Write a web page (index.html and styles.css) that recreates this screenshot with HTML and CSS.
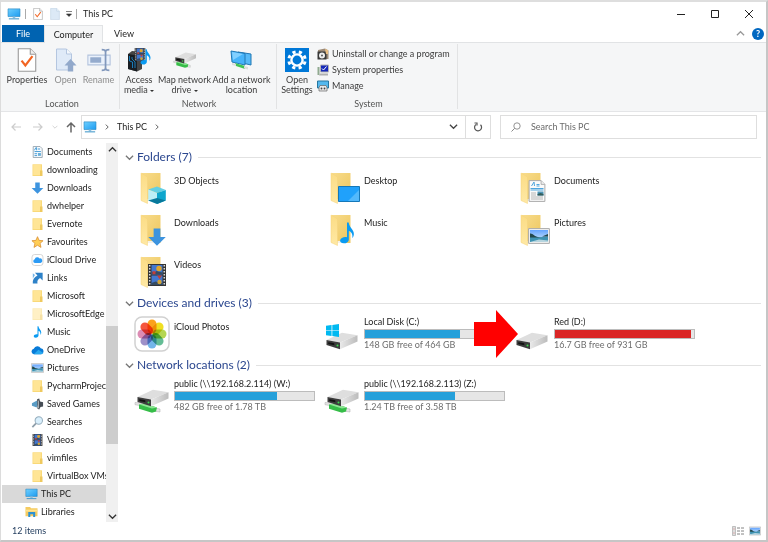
FILE: index.html
```html
<!DOCTYPE html>
<html lang="en">
<head>
<meta charset="utf-8">
<title>This PC</title>
<link rel="stylesheet" href="styles.css">
</head>
<body>
<svg class="sprite" aria-hidden="true">
  <defs>
    <linearGradient id="gScreen" x1="0" y1="0" x2="1" y2="1"><stop offset="0" stop-color="#6fd0ff"/><stop offset="1" stop-color="#1c9bf0"/></linearGradient>
    <linearGradient id="gFold" x1="0" y1="0" x2="1" y2="1"><stop offset="0" stop-color="#f8dc8c"/><stop offset="1" stop-color="#edc65e"/></linearGradient>
    <linearGradient id="gFlap" x1="0" y1="0" x2="0" y2="1"><stop offset="0" stop-color="#fbdc85"/><stop offset="1" stop-color="#ffe9a5"/></linearGradient>
    <linearGradient id="gDrive" x1="0" y1="0" x2="1" y2="0"><stop offset="0" stop-color="#e9e9e9"/><stop offset="1" stop-color="#bcbcbc"/></linearGradient>
    <linearGradient id="gSky" x1="0" y1="0" x2="0" y2="1"><stop offset="0" stop-color="#64a4ff"/><stop offset="1" stop-color="#d8eefa"/></linearGradient>
  </defs>
  <symbol id="pc" viewBox="0 0 16 14"><path d="M1 1h14v9H1z" fill="url(#gScreen)" stroke="#2a86c0" stroke-width=".7"/><path d="M6.500 10h3v2h-3z" fill="#8bbfe0"/><path d="M2 12h12v1.300H2z" fill="#4a9ccc"/></symbol>
  <symbol id="check" viewBox="0 0 18 22"><path d="M1 .7h11l5 5v15.600H1z" fill="#fff" stroke="#999"/><path d="M12 .7v5h5" fill="#eee" stroke="#999"/><path d="M4 11.500l3.500 4.500 6.500-8.500" fill="none" stroke="#f26522" stroke-width="2"/></symbol>
  <symbol id="page" viewBox="0 0 18 22"><path d="M1 .7h11l5 5v15.600H1z" fill="#dce9f6" stroke="#b9cde2"/><path d="M12 .7v5h5" fill="#eef5fb" stroke="#b9cde2"/></symbol>
  <symbol id="open" viewBox="0 0 22 24"><path d="M1.500 1h10l5 5v16h-15z" fill="#dfeaf8" stroke="#b4c6e0"/><path d="M11.500 1v5h5" fill="#f4f8fd" stroke="#b4c6e0"/><path d="M15.500 11l6 6.500h-3.300v6h-5.400v-6H9.500z" fill="#92a9cb"/></symbol>
  <symbol id="rename" viewBox="0 0 22 22"><path d="M.8 6.500h20.400v9H.8z" fill="#eaf1fb" stroke="#b4c4dd"/><path d="M3 8.500h10v5H3z" fill="#94abcd"/><path d="M13.500 1.500c2.500 0 3.500.5 3.500 2v15c0 1.500-1 2-3.500 2M20.500 1.500c-2.500 0-3.500.5-3.500 2M17 18.500c0 1.500 1 2 3.500 2" fill="none" stroke="#8298bc" stroke-width="1.600"/></symbol>
  <symbol id="folder" viewBox="0 0 10 12"><path d="M0 .3h9.500V12H0z" fill="#f9d978"/><path d="M.7.9h7.600V11H.7z" fill="#ffe596"/><path d="M7.500 6.500h2.500V12H7.500z" fill="#efc95e"/></symbol>
  <symbol id="doc" viewBox="0 0 12 14"><path d="M1 .6h8l2.500 2.500v10.300H1z" fill="#fafcfe" stroke="#8798a5" stroke-width=".9"/><path d="M2.500 5l1.500-3h1v3M6.500 3.500H9M2.500 6.500h7.500M2.500 9h3M2.500 11.200h3" stroke="#3b97d3" stroke-width="1.100" fill="none"/><path d="M6.500 8.200h3.500v3.300H6.500z" fill="#69afd9"/></symbol>
  <symbol id="down" viewBox="0 0 16 16"><path d="M5 .5h6v7.500h4.800L8 15.800.2 8H5z" fill="#3d94df"/></symbol>
  <symbol id="star" viewBox="0 0 14 14"><path d="M7 .8l1.800 4.300 4.700.4L10 8.600l1.100 4.700L7 10.800l-4.100 2.500L4 8.600.5 5.500l4.700-.4z" fill="#ffce57" stroke="#d98e31" stroke-width=".9"/></symbol>
  <symbol id="icloud" viewBox="0 0 14 14"><rect x=".6" y=".6" width="12.800" height="12.800" rx="3" fill="#fff" stroke="#cfcfcf"/><path d="M4 10.500a2.300 2.300 0 0 1-.2-4.500 3 3 0 0 1 5.500-.8 2.700 2.700 0 0 1 1.200 5.300z" fill="#2c9bf5"/></symbol>
  <symbol id="link" viewBox="0 0 14 14"><path d="M4 1h9v9l-3-3c-3 2-3.500 3.500-3 6.500H1.500C1 9 3 6 7 4z" fill="#2e82c8"/><path d="M1.500 1.500l2.500 2-2.500 4z" fill="#73b4e7"/></symbol>
  <symbol id="note" viewBox="0 0 16 24"><path d="M8 .5h1.800C10.500 6 15.500 8 15.500 13c0 2-1 4-1.700 4.500C14.500 13 12.500 10.500 10 9.500V19c0 2.500-2.500 4.300-5.500 4.300S.3 21.700.5 20C.8 17.500 5 15.800 8 16.700z" fill="#0a9bf2"/></symbol>
  <symbol id="onedrive" viewBox="0 0 14 10"><path d="M3 9.500a3 3 0 0 1 0-5.900A4.300 4.300 0 0 1 10.500 3a3.300 3.300 0 0 1 .5 6.500z" fill="#087bd8"/><path d="M3 9.500l5-4.800 5.300 3.500A3 3 0 0 1 11 9.500z" fill="#28a8ee"/></symbol>
  <symbol id="picture" viewBox="0 0 22 16"><path d="M.6.600h20.800v14.800H.6z" fill="#f4f4f4" stroke="#aaa"/><path d="M2 2h18v12H2z" fill="url(#gSky)"/><path d="M2 6c3 0 4 3 9 3.200l9-.7V14H2z" fill="#3e93b2"/><path d="M2 5.500c3-.5 4 3 8 3.500l3 .5H2zM14 8.500l6-2.500v2.500z" fill="#24494c"/><path d="M2 14l9-2.500 9 1V14z" fill="#b7d5df"/></symbol>
  <symbol id="games" viewBox="0 0 14 14"><path d="M.5 6l6-3 1.500 4-2 4-5.500-2z" fill="#599bc4"/><path d="M6.500 1.500l2.500-1 1 3.500 3.500 1v5l-3 .5-1.500 3-2-1z" fill="#454d55"/><path d="M8 3v9" stroke="#c5d1d8"/></symbol>
  <symbol id="search" viewBox="0 0 14 14"><circle cx="8.500" cy="5.300" r="4.300" fill="#d9effc" stroke="#94adbd" stroke-width="1.200"/><path d="M5.300 8.500L1 13" stroke="#8e9eaa" stroke-width="2"/></symbol>
  <symbol id="film" viewBox="0 0 18 22"><path d="M0 0h18v22H0z" fill="#343434"/><path d="M3.500 1h11v9.500h-11zM3.500 11.500h11V21h-11z" fill="#4277cf"/><path d="M3.500 7.500l3 1 2-1.500 6 1.500v2h-11zM3.500 19l4-1.500 7 1.500v2h-11z" fill="#354c63"/><circle cx="11" cy="4.500" r="2.700" fill="#dfa52d"/><path d="M4.500 7.200h3v3h-3zM9 11.500h5l-2.500 3.500z" fill="#c43e37"/><circle cx="11.500" cy="18" r="2.200" fill="#d2a436"/><path d="M1.700 1v20M16.300 1v20" stroke="#ddd" stroke-width="1.500" stroke-dasharray="1.500 1.500"/></symbol>
  <symbol id="libraries" viewBox="0 0 14 13"><path d="M.5 1h5l1 1.500h7V11H.5z" fill="#f5cb61"/><path d="M.5 4h13v2H.5z" fill="#ffe48f"/><path d="M3.500 6.500H11V12H8.800V9H5.700v3H3.500z" fill="#2c91d2"/></symbol>
  <symbol id="bigfolder" viewBox="0 0 22 32"><path d="M2 1h18.500v28H2z" fill="url(#gFold)"/><path d="M6 27h8v2H6z" fill="#f4f1e8"/><path d="M1 1l6.500 4v26.500L1 28.500z" fill="url(#gFlap)" stroke="#f4d27a" stroke-width=".5"/></symbol>
  <symbol id="cube" viewBox="0 0 18 18"><path d="M9 .5l8.800 3.500L9 7 .2 3.500z" fill="#62cfe3"/><path d="M.2 3.500L9 7v11L.2 14.500z" fill="#bceef6"/><path d="M17.800 4L9 7v11l8.800-3.500z" fill="#0da6cd"/><path d="M.2 14.500L9 12l8.800 2.500L9 18z" fill="#08799c"/></symbol>
  <symbol id="desktop" viewBox="0 0 22 16"><path d="M.5.500h21v15H.5z" fill="#20a1fb" stroke="#1578b9"/><path d="M10 15L21 4v11z" fill="#53b9fc"/></symbol>
  <symbol id="bigdoc" viewBox="0 0 17 22"><path d="M.6.600h12l3.800 3.800v17H.6z" fill="#fafafa" stroke="#aaa"/><path d="M12.600.600v3.800h3.800" fill="#eee" stroke="#999" stroke-width=".7"/><path d="M3 6l2.500-4L6 6M8 4.500h3M8 6h3M2 8.500h13M2 10h13" stroke="#4da5dd" fill="none"/><path d="M2.500 13h5M2.500 15h5M2.500 17h12M2.500 19h12" stroke="#999" stroke-width=".7"/><path d="M9 11.500h6v4H9z" fill="#4d95b7"/><path d="M9 14l3-1 3 1v1.500H9z" fill="#355d5a"/></symbol>
  <symbol id="drive" viewBox="0 0 32 18"><path d="M.5 8L16 .8l15.500 2.400L14 10.500z" fill="#dedede"/><path d="M31.500 3.200v6.300L14 17.300v-6.800z" fill="url(#gDrive)"/><path d="M.5 8L14 10.500v6.800L.5 13z" fill="#3c3c3c"/><path d="M2.300 10.200l6 1.100v2l-6-1.400z" fill="#111"/><circle cx="11.500" cy="13.500" r="1" fill="#38d84a"/></symbol>
  <symbol id="netdrive" viewBox="0 0 36 24"><path d="M1 13.500l6 .5 2 3-8-1.300zM20 19l6 1v3l-7-1z" fill="#e6e6e6" stroke="#aaa" stroke-width=".5"/><path d="M5 15.500l5-1 13 4-1 4-4 1.300-13-4z" fill="#36bd48"/><path d="M5 15.500l5-1 13 4-5 1z" fill="#8be492"/><use href="#drive" x="3" y="0" width="32" height="18"/></symbol>
  <symbol id="win" viewBox="0 0 14 14"><path d="M0 2l6-.9v5.600H0zM6.800 1L14 0v6.700H6.800zM0 7.400h6V13l-6-.9zM6.800 7.400H14V14l-7.200-1z" fill="#00b9f1"/></symbol>
  <symbol id="photos" viewBox="0 0 36 36"><rect x="1" y="1" width="34" height="34" rx="7" fill="#fff" stroke="#d1d1d1" stroke-width="1.500"/><g class="petals"><rect x="13.500" y="3.500" width="9" height="14" rx="4.500" fill="#fba21c"/><rect x="13.500" y="3.500" width="9" height="14" rx="4.500" fill="#f0df22" transform="rotate(45 18 18)"/><rect x="13.500" y="3.500" width="9" height="14" rx="4.500" fill="#b5d650" transform="rotate(90 18 18)"/><rect x="13.500" y="3.500" width="9" height="14" rx="4.500" fill="#64bd95" transform="rotate(135 18 18)"/><rect x="13.500" y="3.500" width="9" height="14" rx="4.500" fill="#73b6ea" transform="rotate(180 18 18)"/><rect x="13.500" y="3.500" width="9" height="14" rx="4.500" fill="#9d90c8" transform="rotate(225 18 18)"/><rect x="13.500" y="3.500" width="9" height="14" rx="4.500" fill="#dc8cb4" transform="rotate(270 18 18)"/><rect x="13.500" y="3.500" width="9" height="14" rx="4.500" fill="#f5573e" transform="rotate(315 18 18)"/></g></symbol>
  <symbol id="media" viewBox="0 0 24 24"><path d="M1 6l4-3 10 1v17l-5 2.500L1 21z" fill="#454545"/><path d="M1 6l9 1.500v16L1 21z" fill="#191e23"/><path d="M2.500 8v5l3 1v6M5 9v2l3 3v6" stroke="#1993dd" fill="none" stroke-width=".8"/><use href="#film" x="7" y="0" width="12" height="13"/><use href="#note" x="13" y="1" width="11" height="16"/></symbol>
  <symbol id="netpc" viewBox="0 0 24 20"><path d="M8 2l13 2v11L8 12z" fill="#56b9f7" stroke="#2178b5"/><path d="M1 1l14 2.500V15L2 12z" fill="#45b3fa" stroke="#2178b5"/><path d="M2 2l11 2L3 10z" fill="#82d0ff"/><path d="M5 13l10 3v3l-9-3z" fill="#3fc354"/><path d="M2 13l4 1v2l-4-1zM14 16l4 1v2.500l-4-1z" fill="#ddd"/></symbol>
  <symbol id="gear" viewBox="0 0 24 24"><path d="M0 0h24v24H0z" fill="#0078d7"/><g fill="none" stroke="#fff"><circle cx="12" cy="12" r="5.600" stroke-width="2.400"/><circle cx="12" cy="12" r="8.200" stroke-width="3" stroke-dasharray="3.220 3.220" transform="rotate(11 12 12)"/></g></symbol>
  <symbol id="program" viewBox="0 0 12 12"><path d="M1 2l7-1.500 3.500 2V11H1z" fill="#9b8a78"/><path d="M.5 3.500h9v8h-9z" fill="#383838"/><circle cx="5" cy="7.500" r="3" fill="#ededed"/><circle cx="5" cy="7.500" r="1" fill="#555"/><path d="M8 1l3 1v4H9z" fill="#e8bd82"/></symbol>
  <symbol id="sysprop" viewBox="0 0 12 12"><path d="M3.500 1h8v7h-8z" fill="#1529b8" stroke="#b5b5b5"/><path d="M5 4.500L6.500 6l3-3.500" stroke="#fff" fill="none"/><path d="M.5 3h2v8h-2z" fill="#91aa91"/><path d="M3 9.500h8v2H2z" fill="#b0b0b0"/></symbol>
  <symbol id="manage" viewBox="0 0 12 12"><path d="M.5 1h11v7H.5z" fill="#54b8ee" stroke="#27779f"/><path d="M2 7.500l1-2h6l1 2V11H2z" fill="#e8e8e8" stroke="#666" stroke-width=".7"/><circle cx="4.500" cy="8.500" r=".9" fill="#444"/><circle cx="7.500" cy="8.500" r=".9" fill="#444"/></symbol>
  <symbol id="chev" viewBox="0 0 10 10"><path d="M1 3l4 4 4-4" fill="none" stroke="currentColor" stroke-width="1.400"/></symbol>
  <symbol id="left" viewBox="0 0 12 12"><path d="M11 6H2M5.500 2.500L2 6l3.500 3.500" fill="none" stroke="currentColor" stroke-width="1.200"/></symbol>
</svg>

<div class="window">
  <header class="titlebar">
    <svg class="i14"><use href="#pc"/></svg>
    <span class="bar"></span>
    <button class="quick" aria-label="Properties"><svg class="i12"><use href="#check"/></svg></button>
    <button class="quick" aria-label="New folder"><svg class="i12"><use href="#page"/></svg></button>
    <button class="quick more" aria-label="Customise"><svg class="i6" viewBox="0 0 6 6"><path d="M0 .5h6M.5 3h5L3 5.500z" fill="#333" stroke="#333" stroke-width=".6"/></svg></button>
    <span class="bar"></span>
    <h1>This PC</h1>
    <div class="controls">
      <button aria-label="Minimise"><svg viewBox="0 0 8 8"><path d="M0 4.500h8" stroke="#222"/></svg></button>
      <button aria-label="Maximise"><svg viewBox="0 0 8 8"><path d="M.5.500h7v7h-7z" fill="none" stroke="#222"/></svg></button>
      <button aria-label="Close"><svg viewBox="0 0 8 8"><path d="M0 0l8 8M8 0L0 8" stroke="#222"/></svg></button>
    </div>
  </header>

  <nav class="tabs">
    <button class="file">File</button>
    <button class="current">Computer</button>
    <button class="view">View</button>
    <div class="tabs-end">
      <button aria-label="Collapse ribbon"><svg class="i8 flip"><use href="#chev"/></svg></button>
      <button class="help" aria-label="Help">?</button>
    </div>
  </nav>

  <section class="ribbon">
    <div class="group location">
      <div class="tools">
        <button><svg><use href="#check"/></svg><span>Properties</span></button>
        <button disabled><svg><use href="#open"/></svg><span>Open</span></button>
        <button disabled><svg><use href="#rename"/></svg><span>Rename</span></button>
      </div>
      <h2>Location</h2>
    </div>
    <div class="group network">
      <div class="tools">
        <button><svg><use href="#media"/></svg><span>Access<br>media <i class="drop"></i></span></button>
        <button><svg><use href="#netdrive"/></svg><span>Map network<br>drive <i class="drop"></i></span></button>
        <button><svg><use href="#netpc"/></svg><span>Add a network<br>location</span></button>
      </div>
      <h2>Network</h2>
    </div>
    <div class="group system">
      <div class="tools">
        <button><svg><use href="#gear"/></svg><span>Open<br>Settings</span></button>
        <div class="stack">
          <button><svg><use href="#program"/></svg>Uninstall or change a program</button>
          <button><svg><use href="#sysprop"/></svg>System properties</button>
          <button><svg><use href="#manage"/></svg>Manage</button>
        </div>
      </div>
      <h2>System</h2>
    </div>
  </section>

  <div class="navbar">
    <div class="history">
      <button aria-label="Back" disabled><svg class="i12"><use href="#left"/></svg></button>
      <button aria-label="Forward" disabled><svg class="i12 flip"><use href="#left"/></svg></button>
      <button class="recent" aria-label="Recent locations" disabled><svg class="i6"><use href="#chev"/></svg></button>
      <button class="up" aria-label="Up"><svg class="i12" viewBox="0 0 12 12"><path d="M6 11.500V2M2 6l4-4 4 4" fill="none" stroke="#666" stroke-width="1.500"/></svg></button>
    </div>
    <div class="address">
      <svg class="i14"><use href="#pc"/></svg>
      <svg class="i6 side"><use href="#chev"/></svg>
      <button class="crumb">This PC</button>
      <svg class="i6 side"><use href="#chev"/></svg>
      <button class="expand" aria-label="Previous locations"><svg class="i8"><use href="#chev"/></svg></button>
      <button class="refresh" aria-label="Refresh"><svg class="i10" viewBox="0 0 10 10"><path d="M7.500 2.800A3.500 3.500 0 1 1 3 2.500M1.500 1H4v2.500" fill="none" stroke="#555" stroke-width="1.200"/></svg></button>
    </div>
    <label class="searchbox">
      <svg class="i10" viewBox="0 0 10 10"><circle cx="6" cy="4" r="3.200" fill="none" stroke="#888" stroke-width=".9"/><path d="M3.700 6.300L.5 9.500" stroke="#888"/></svg>
      <input type="search" placeholder="Search This PC" aria-label="Search This PC">
    </label>
  </div>

  <div class="body">
    <aside class="sidebar">
      <ul class="tree">
        <li><a href="#"><svg><use href="#doc"/></svg>Documents</a></li>
        <li><a href="#"><svg><use href="#folder"/></svg>downloading</a></li>
        <li><a href="#"><svg><use href="#down"/></svg>Downloads</a></li>
        <li><a href="#"><svg><use href="#folder"/></svg>dwhelper</a></li>
        <li><a href="#"><svg><use href="#folder"/></svg>Evernote</a></li>
        <li><a href="#"><svg><use href="#star"/></svg>Favourites</a></li>
        <li><a href="#"><svg><use href="#icloud"/></svg>iCloud Drive</a></li>
        <li><a href="#"><svg><use href="#link"/></svg>Links</a></li>
        <li><a href="#"><svg><use href="#folder"/></svg>Microsoft</a></li>
        <li><a href="#"><svg class="faded"><use href="#folder"/></svg>MicrosoftEdge</a></li>
        <li><a href="#"><svg><use href="#note"/></svg>Music</a></li>
        <li><a href="#"><svg><use href="#onedrive"/></svg>OneDrive</a></li>
        <li><a href="#"><svg><use href="#picture"/></svg>Pictures</a></li>
        <li><a href="#"><svg><use href="#folder"/></svg>PycharmProjects</a></li>
        <li><a href="#"><svg><use href="#games"/></svg>Saved Games</a></li>
        <li><a href="#"><svg><use href="#search"/></svg>Searches</a></li>
        <li><a href="#"><svg><use href="#film"/></svg>Videos</a></li>
        <li><a href="#"><svg><use href="#folder"/></svg>vimfiles</a></li>
        <li><a href="#"><svg><use href="#folder"/></svg>VirtualBox VMs</a></li>
        <li class="root selected"><a href="#"><svg><use href="#pc"/></svg>This PC</a></li>
        <li class="root"><a href="#"><svg><use href="#libraries"/></svg>Libraries</a></li>
      </ul>
      <div class="scrollbar">
        <button aria-label="Scroll up"><svg class="i8 flip"><use href="#chev"/></svg></button>
        <div class="track"><div class="thumb"></div></div>
        <button aria-label="Scroll down"><svg class="i8"><use href="#chev"/></svg></button>
      </div>
    </aside>

    <main class="content">
      <h2 class="section"><svg class="i8"><use href="#chev"/></svg>Folders (7)</h2>
      <div class="grid folders">
        <a class="item" href="#"><span class="icon"><svg class="base"><use href="#bigfolder"/></svg><svg class="over"><use href="#cube"/></svg></span>3D Objects</a>
        <a class="item" href="#"><span class="icon"><svg class="base"><use href="#bigfolder"/></svg><svg class="over wide"><use href="#desktop"/></svg></span>Desktop</a>
        <a class="item" href="#"><span class="icon"><svg class="base"><use href="#bigfolder"/></svg><svg class="over tall"><use href="#bigdoc"/></svg></span>Documents</a>
        <a class="item" href="#"><span class="icon"><svg class="base"><use href="#bigfolder"/></svg><svg class="over"><use href="#down"/></svg></span>Downloads</a>
        <a class="item" href="#"><span class="icon"><svg class="base"><use href="#bigfolder"/></svg><svg class="over tall"><use href="#note"/></svg></span>Music</a>
        <a class="item" href="#"><span class="icon"><svg class="base"><use href="#bigfolder"/></svg><svg class="over wide"><use href="#picture"/></svg></span>Pictures</a>
        <a class="item" href="#"><span class="icon"><svg class="base"><use href="#bigfolder"/></svg><svg class="over tall"><use href="#film"/></svg></span>Videos</a>
      </div>

      <h2 class="section"><svg class="i8"><use href="#chev"/></svg>Devices and drives (3)</h2>
      <div class="grid">
        <a class="item app" href="#"><span class="icon"><svg class="photos"><use href="#photos"/></svg></span>iCloud Photos</a>
        <a class="item" href="#"><span class="icon"><svg class="drive"><use href="#drive"/></svg><svg class="win"><use href="#win"/></svg></span>
          <span class="info">Local Disk (C:)<span class="meter"><span style="width:68%"></span></span><small>148 GB free of 464 GB</small></span></a>
        <a class="item" href="#"><span class="icon"><svg class="drive"><use href="#drive"/></svg></span>
          <span class="info">Red (D:)<span class="meter full"><span style="width:98.2%"></span></span><small>16.7 GB free of 931 GB</small></span>
          <svg class="pointer" viewBox="0 0 44 48"><path d="M0 12h22V0l22 24-22 24V36H0z" fill="#f00"/></svg></a>
      </div>

      <h2 class="section"><svg class="i8"><use href="#chev"/></svg>Network locations (2)</h2>
      <div class="grid">
        <a class="item" href="#"><span class="icon"><svg class="netdrive"><use href="#netdrive"/></svg></span>
          <span class="info">public (\\192.168.2.114) (W:)<span class="meter"><span style="width:73.500%"></span></span><small>482 GB free of 1.78 TB</small></span></a>
        <a class="item" href="#"><span class="icon"><svg class="netdrive"><use href="#netdrive"/></svg></span>
          <span class="info">public (\\192.168.2.113) (Z:)<span class="meter"><span style="width:64.500%"></span></span><small>1.24 TB free of 3.58 TB</small></span></a>
      </div>
    </main>
  </div>

  <footer class="status">
    <span class="count">12 items</span>
    <button aria-label="Details view"><svg class="i12" viewBox="0 0 12 10"><path d="M.5.500h3v9h-3z" fill="#ddd" stroke="#aaa" stroke-width=".7"/><path d="M1.500 3h1M1.500 7h1" stroke="#d88"/><path d="M5 2h3M9 2h3M5 5h3M9 5h3M5 8h3M9 8h3" stroke="#777" stroke-width=".9"/></svg></button>
    <button aria-label="Large icons view"><svg class="i12"><use href="#picture"/></svg></button>
  </footer>
</div>
</body>
</html>
```
FILE: styles.css
```css
* { box-sizing: border-box; }

body {
  margin: 0;
  background: #fff;
  color: #222;
  font: 9px/10px Lato, "Open Sans", sans-serif;
}

button, input {
  margin: 0;
  padding: 0;
  border: 0;
  background: none;
  color: inherit;
  font: inherit;
}

h1, h2, ul { margin: 0; padding: 0; font-weight: 400; }
h1 { font-size: 9px; }
a { color: inherit; text-decoration: none; }
svg { display: block; flex: none; }

.sprite { position: absolute; width: 0; height: 0; }
.i6 { width: 6px; height: 6px; }
.i8 { width: 9px; height: 9px; }
.i10 { width: 10px; height: 10px; }
.i12 { width: 12px; height: 12px; }
.i14 { width: 14px; height: 12px; }
.flip { transform: rotate(180deg); }
.side { transform: rotate(-90deg); }
.petals rect { mix-blend-mode: multiply; }

.window {
  display: flex;
  flex-direction: column;
  min-height: 100vh;
  border: 2px solid #c6c6c6;
  border-left: 1px solid #dcdcdc;
  border-top-color: #dedede;
}

/* Title bar */
.titlebar {
  display: flex;
  align-items: center;
  height: 23px;
  padding-left: 6px;
}
.titlebar .bar { width: 1px; height: 10px; margin-left: 4px; background: #aaa; }
.titlebar .quick { margin-left: 6px; }
.titlebar .quick + .quick { margin-left: 5px; }
.titlebar h1 { margin-left: 6px; }
.controls { display: flex; margin-left: auto; }
.controls button { display: grid; place-items: center; width: 34px; height: 23px; }
.controls svg { width: 8px; height: 8px; }

/* Tabs */
.tabs { display: flex; height: 18px; border-bottom: 1px solid #e1e3e5; }
.tabs > button { height: 17px; }
.file { width: 42px; margin-left: 1px; background: #0063b1; color: #fff; }
.tabs .current { width: 59px; height: 18px; border: 1px solid #e1e3e5; border-bottom: 0; background: #f5f6f7; }
.view { width: 42px; }
.tabs-end { display: flex; align-items: center; gap: 7px; margin-left: auto; padding-right: 2px; color: #999; }
.help { width: 12px; height: 12px; border-radius: 50%; background: #0067c0; color: #fff; font-weight: 700; }

/* Ribbon */
.ribbon { display: flex; height: 69px; border-bottom: 1px solid #e4e5e7; background: #f5f6f7; color: #3c3c3c; }
.group { display: flex; flex-direction: column; justify-content: space-between; margin: 1px 0 2px; border-right: 1px solid #e2e3e4; }
.group h2 { color: #555; font-size: 9px; text-align: center; }
.tools { display: flex; }
.tools > button { display: flex; flex-direction: column; align-items: center; padding-top: 4px; white-space: nowrap; }
.tools > button > svg { width: 24px; height: 24px; margin-bottom: 3px; }
.tools > button:disabled { color: #8d8d8d; }
.location { padding-left: 4px; width: 119px; }
.location .tools > button { width: 33px; }
.location .tools > button:first-child { width: 44px; }
.network { width: 157px; padding-left: 2px; }
.network .tools > button { width: 57px; }
.network .tools > button:first-child { width: 34px; }
.system { width: 181px; padding-left: 3px; }
.system .tools > button { width: 34px; }
.drop { display: inline-block; border: 2px solid transparent; border-top-color: #333; border-bottom: 0; vertical-align: middle; }
.stack { display: flex; flex-direction: column; gap: 4px; padding: 4px 0 0 3px; }
.stack button { display: flex; align-items: center; gap: 3px; height: 12px; white-space: nowrap; }
.stack svg { width: 12px; height: 12px; }

/* Navigation row */
.navbar { display: flex; align-items: center; height: 31px; padding: 0 9px 2px 0; }
.history { display: flex; align-items: center; gap: 10px; width: 80px; padding-left: 9px; color: #555; }
.history :disabled { color: #ccc; }
.history .up { margin-left: -3px; }
.recent { margin-left: -2px; }
.address, .searchbox { display: flex; align-items: center; height: 24px; border: 1px solid #dedede; }
.address { flex: 1; gap: 7px; padding-left: 1px; color: #444; }
.crumb { color: #222; }
.expand { margin-left: auto; }
.refresh { display: grid; place-items: center; width: 25px; height: 22px; border-left: 1px solid #dedede; }
.searchbox { width: 34%; margin-left: 9px; padding-left: 10px; gap: 10px; }
.searchbox input { flex: 1; min-width: 0; outline: 0; }
.searchbox input::placeholder { color: #6b6b6b; opacity: 1; }

/* Body */
.body { display: flex; flex: 1; }
.sidebar { display: flex; width: 117px; }
.tree { flex: 1; min-width: 0; list-style: none; }
.tree a { display: flex; align-items: center; gap: 3px; height: 18px; padding-left: 30px; overflow: hidden; white-space: nowrap; }
.tree svg { width: 13px; height: 12px; }
.tree .faded { opacity: .55; }
.tree .root a { padding-left: 24px; }
.tree .selected a { padding-left: 23px; }
.selected { margin-left: 1px; background: #d9d9d9; }
.scrollbar { display: flex; flex-direction: column; width: 12px; background: #f0f0f0; color: #333; }
.scrollbar button { display: grid; place-items: center; height: 12px; }
.track { display: flex; flex: 1; flex-direction: column; justify-content: flex-end; padding-bottom: 66px; }
.thumb { height: 41%; background: #cdcdcd; }

.content { flex: 1; min-width: 0; padding: 4px 5px 0 7px; }
.section { display: flex; align-items: center; gap: 3px; height: 20px; color: #2b478f; font-size: 12px; line-height: 20px; }
.section::after { content: ""; flex: 1; height: 1px; margin-left: 3px; background: #e2e2e2; }
.section svg { color: #777; }
.grid { display: grid; grid-template-columns: repeat(auto-fill, 190px); grid-auto-rows: 42px; padding-left: 9px; }
.item { position: relative; display: flex; padding: 9px 9px 0 0; }
.icon { position: relative; flex: none; width: 40px; height: 32px; margin-top: -4px; }
.base { width: 22px; height: 32px; margin-left: 6px; }
.over { position: absolute; left: 14px; bottom: 0; width: 18px; height: 18px; }
.over.wide { width: 22px; height: 16px; bottom: 2px; }
.over.tall { width: 18px; height: 22px; bottom: 2px; }
.photos { width: 36px; height: 36px; margin-top: -2px; }
.drive { width: 32px; height: 18px; margin: 14px 0 0 2px; }
.win { position: absolute; top: 6px; left: 2px; width: 13px; height: 13px; }
.netdrive { width: 36px; height: 24px; margin-top: 9px; }
.info { display: flex; flex: 1; flex-direction: column; margin-top: -5px; white-space: nowrap; }
.meter { display: block; height: 10px; margin: 2px 0 1px; border: 1px solid #bcbcbc; background: #e6e6e6; }
.meter span { display: block; height: 8px; background: #26a0da; }
.meter.full span { background: #da2626; }
.info small { color: #6d6d6d; font-size: 9px; line-height: 10px; }
.pointer { position: absolute; top: -3px; left: -40px; width: 44px; height: 48px; }

/* Status bar */
.status { display: flex; align-items: center; gap: 5px; height: 18px; padding: 0 5px 0 11px; color: #1e395b; }
.count { flex: 1; }
```
